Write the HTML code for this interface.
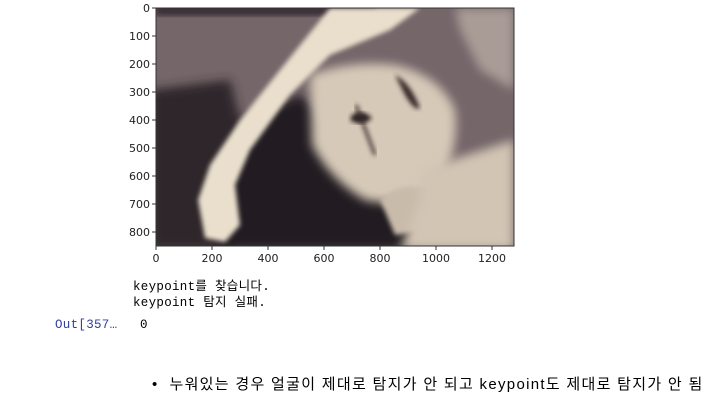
<!DOCTYPE html>
<html><head><meta charset="utf-8"><style>
body{margin:0;width:722px;height:404px;background:#fff;position:relative;overflow:hidden;font-family:"Liberation Sans","Noto Sans CJK KR",sans-serif}
.m{position:absolute;font-family:"Liberation Mono","Noto Sans CJK KR",monospace;font-size:12.5px;letter-spacing:0.3px;color:#000;white-space:pre}
</style></head><body>
<svg style="position:absolute;left:0;top:0" width="722" height="270">
<defs>
<filter id="b"><feGaussianBlur stdDeviation="5"/></filter>
<filter id="b2"><feGaussianBlur stdDeviation="2.5"/></filter>
<clipPath id="c"><rect x="156" y="8" width="358" height="238"/></clipPath>
</defs>
<g clip-path="url(#c)">
<rect x="156" y="8" width="358" height="238" fill="#746669"/>
<rect x="156" y="4" width="220" height="12" fill="#3e3238" filter="url(#b2)"/>
<path d="M150 90 L230 80 L250 160 L230 250 L150 250Z" fill="#2f262c" filter="url(#b)"/>
<path d="M240 120 L300 95 L330 120 L360 170 L420 210 L410 250 L220 250 L230 180Z" fill="#211a20" filter="url(#b)"/>
<path d="M310 75 Q350 60 395 65 Q440 75 455 110 Q460 155 435 190 Q400 208 365 200 Q330 180 312 145Z" fill="#d6c9b8" filter="url(#b)"/>
<path d="M380 200 Q400 180 430 190 L430 230 L395 235Z" fill="#c9bbaa" filter="url(#b2)"/>
<path d="M420 170 L514 140 L514 250 L400 250 L420 200Z" fill="#d2c5b4" filter="url(#b)"/>
<path d="M455 8 L514 8 L514 90 L480 70 L460 30Z" fill="#a99c96" filter="url(#b)"/>
<path d="M330 8 L420 8 L390 30 L330 55 L290 95 L250 150 L235 185 L240 225 L225 242 L205 238 L198 200 L210 165 L240 120 L280 70Z" fill="#e9dfcc" filter="url(#b2)"/>
<path d="M352 115 Q362 108 372 118 Q362 128 350 120Z" fill="#2a2024" filter="url(#b2)"/>
<path d="M356 105 L375 155" stroke="#3a2a2c" stroke-width="3" filter="url(#b2)"/>
<path d="M395 75 Q410 82 420 108 Q415 112 405 95Z" fill="#3a2a2c" filter="url(#b2)"/>
</g>
<rect x="156" y="8" width="358" height="238" fill="none" stroke="#333" stroke-width="1"/>
<g font-family="DejaVu Sans,sans-serif" font-size="11" fill="#222" text-anchor="end">
<text x="150" y="12">0</text><text x="150" y="40">100</text><text x="150" y="68">200</text><text x="150" y="96">300</text><text x="150" y="124">400</text><text x="150" y="152">500</text><text x="150" y="180">600</text><text x="150" y="208">700</text><text x="150" y="236">800</text>
</g>
<g stroke="#333"><line x1="152" y1="8" x2="156" y2="8"/><line x1="152" y1="36" x2="156" y2="36"/><line x1="152" y1="64" x2="156" y2="64"/><line x1="152" y1="92" x2="156" y2="92"/><line x1="152" y1="120" x2="156" y2="120"/><line x1="152" y1="148" x2="156" y2="148"/><line x1="152" y1="176" x2="156" y2="176"/><line x1="152" y1="204" x2="156" y2="204"/><line x1="152" y1="232" x2="156" y2="232"/>
<line x1="156" y1="246" x2="156" y2="250"/><line x1="212" y1="246" x2="212" y2="250"/><line x1="268" y1="246" x2="268" y2="250"/><line x1="324" y1="246" x2="324" y2="250"/><line x1="380" y1="246" x2="380" y2="250"/><line x1="436" y1="246" x2="436" y2="250"/><line x1="492" y1="246" x2="492" y2="250"/></g>
<g font-family="DejaVu Sans,sans-serif" font-size="11" fill="#222" text-anchor="middle">
<text x="156" y="262">0</text><text x="212" y="262">200</text><text x="268" y="262">400</text><text x="324" y="262">600</text><text x="380" y="262">800</text><text x="436" y="262">1000</text><text x="492" y="262">1200</text>
</g>
</svg>
<div class="m" style="left:133px;top:275px">keypoint를 찾습니다.</div>
<div class="m" style="left:133px;top:291px">keypoint 탐지 실패.</div>
<div class="m" style="left:55px;top:318px;color:#303f9f">Out[357…</div>
<div class="m" style="left:140px;top:318px">0</div>
<div style="position:absolute;left:152px;top:373px;font-size:15px;letter-spacing:1.3px;color:#000;white-space:nowrap">•&nbsp;&nbsp;누워있는 경우 얼굴이 제대로 탐지가 안 되고 keypoint도 제대로 탐지가 안 됨</div>
</body></html>
